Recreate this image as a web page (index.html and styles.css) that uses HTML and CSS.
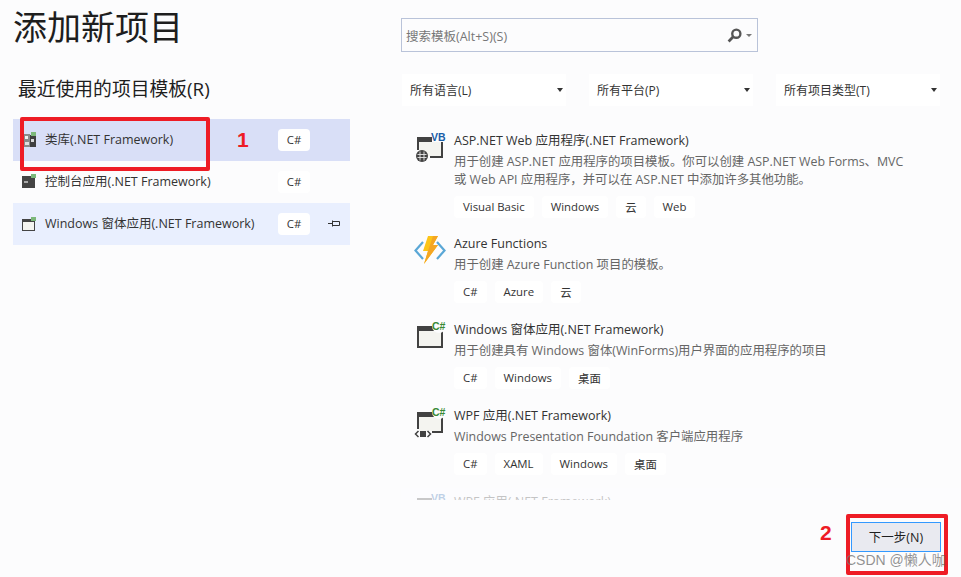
FILE: index.html
```html
<!DOCTYPE html>
<html lang="zh-CN">

<head>
  <meta charset="UTF-8">
  <meta name="viewport" content="width=device-width, initial-scale=1.0">
  <title>添加新项目</title>
  <link rel="stylesheet" href="styles.css">
</head>

<body>
  <div class="page">
    <div class="columns">
      <section class="recent">
        <h1>添加新项目</h1>
        <h2>最近使用的项目模板(R)</h2>
        <ul class="recent-list">
          <li class="recent-row selected">
            <svg class="row-icon" viewBox="0 0 14 16">
              <rect x="2" y="2" width="6" height="13" fill="#8a8a8a"/>
              <rect x="8" y="3" width="6" height="12" fill="#3f3f3f"/>
              <rect x="3" y="4" width="3" height="3" fill="#f0f0f0"/>
              <rect x="3" y="10" width="4" height="3" fill="#e0e0e0"/>
              <rect x="9" y="7" width="3" height="3" fill="#d8d8d8"/>
              <rect x="9" y="0" width="5" height="4" fill="#7cb87a"/>
            </svg>
            <span class="row-name">类库(.NET Framework)</span>
            <span class="chip row-chip">C#</span>
          </li>
          <li class="recent-row">
            <svg class="row-icon" viewBox="0 0 14 16">
              <rect x="0" y="2" width="13" height="12" fill="#444"/>
              <rect x="2" y="7" width="4" height="2" fill="#aaa"/>
              <rect x="9" y="0" width="5" height="4" fill="#7cb87a"/>
            </svg>
            <span class="row-name">控制台应用(.NET Framework)</span>
            <span class="chip row-chip">C#</span>
          </li>
          <li class="recent-row pinned">
            <svg class="row-icon" viewBox="0 0 14 16">
              <rect x="0.5" y="3.5" width="12" height="11" fill="#f4f4f0" stroke="#444"/>
              <rect x="0" y="3" width="13" height="3" fill="#444"/>
              <rect x="9" y="1" width="5" height="4" fill="#7cb87a"/>
            </svg>
            <span class="row-name">Windows 窗体应用(.NET Framework)</span>
            <span class="chip row-chip">C#</span>
            <svg class="pin" viewBox="0 0 12 7">
              <path d="M0 3.5H4M4.5 1.5H11.5V5.5H4.5ZM4.5 0.5V6.5" fill="none" stroke="#333"/>
            </svg>
          </li>
        </ul>
      </section>

      <section class="browse">
        <div class="search">
          <span class="search-text">搜索模板(Alt+S)(S)</span>
          <svg class="search-icon" viewBox="0 0 14 14">
            <circle cx="8.7" cy="5.3" r="3.8" fill="none" stroke="#555" stroke-width="2.2"/>
            <path d="M6 8L1.5 12.5" stroke="#555" stroke-width="2.6"/>
          </svg>
          <span class="caret small"></span>
        </div>

        <div class="filters">
          <div class="filter"><span>所有语言(L)</span><span class="caret"></span></div>
          <div class="filter"><span>所有平台(P)</span><span class="caret"></span></div>
          <div class="filter"><span>所有项目类型(T)</span><span class="caret"></span></div>
        </div>

        <div class="templates">
          <article class="template">
            <svg class="template-icon" viewBox="0 0 32 32">
              <path d="M3 4H18V9H29V25H16V23H27V9H5V17H3Z" fill="#424242"/>
              <rect x="5" y="9" width="22" height="14" fill="#f4f4f0"/>
              <circle cx="8" cy="23" r="6" fill="#424242"/>
              <path d="M3.5 21.5H12.5M3.5 24.5H12.5M6 18.5V27.5M10 18.5V27.5" stroke="#e8e8e8" stroke-width="0.9"/>
              <text class="lang vb" x="17" y="8">VB</text>
            </svg>
            <div class="template-body">
              <h3>ASP.NET Web 应用程序(.NET Framework)</h3>
              <p>用于创建 ASP.NET 应用程序的项目模板。你可以创建 ASP.NET Web Forms、MVC<br>或 Web API 应用程序，并可以在 ASP.NET 中添加许多其他功能。</p>
              <div class="chips">
                <span class="chip">Visual Basic</span>
                <span class="chip">Windows</span>
                <span class="chip">云</span>
                <span class="chip">Web</span>
              </div>
            </div>
          </article>

          <article class="template">
            <svg class="template-icon" viewBox="0 0 32 32">
              <path d="M9 6L1.5 14.5L9 23" fill="none" stroke="#5aa7d6" stroke-width="2.2"/>
              <path d="M23 6L30.5 14.5L23 23" fill="none" stroke="#5aa7d6" stroke-width="2.2"/>
              <path d="M14 0H24L19 9H24L10 28L14 15H9Z" fill="#fcc419"/>
              <path d="M24 0L19 9H24L10 28L14 15L19 0Z" fill="#f5a623"/>
            </svg>
            <div class="template-body">
              <h3>Azure Functions</h3>
              <p>用于创建 Azure Function 项目的模板。</p>
              <div class="chips">
                <span class="chip">C#</span>
                <span class="chip">Azure</span>
                <span class="chip">云</span>
              </div>
            </div>
          </article>

          <article class="template">
            <svg class="template-icon" viewBox="0 0 32 32">
              <rect x="3" y="4" width="26" height="22" fill="#424242"/>
              <rect x="5" y="9" width="22" height="15" fill="#f4f4f0"/>
              <circle cx="25" cy="4" r="7" fill="#fcfcfd"/>
              <text class="lang cs" x="18" y="8">C#</text>
            </svg>
            <div class="template-body">
              <h3>Windows 窗体应用(.NET Framework)</h3>
              <p>用于创建具有 Windows 窗体(WinForms)用户界面的应用程序的项目</p>
              <div class="chips">
                <span class="chip">C#</span>
                <span class="chip">Windows</span>
                <span class="chip">桌面</span>
              </div>
            </div>
          </article>

          <article class="template">
            <svg class="template-icon" viewBox="0 0 32 32">
              <path d="M3 4H29V25H18V23H27V9H5V21H3Z" fill="#424242"/>
              <rect x="5" y="9" width="22" height="14" fill="#f4f4f0"/>
              <circle cx="25" cy="4" r="7" fill="#fcfcfd"/>
              <path d="M4.5 23L1.5 26L4.5 29M13.5 23L16.5 26L13.5 29" fill="none" stroke="#424242" stroke-width="1.5"/>
              <rect x="6" y="23" width="6" height="6" fill="#424242"/>
              <text class="lang cs" x="18" y="8">C#</text>
            </svg>
            <div class="template-body">
              <h3>WPF 应用(.NET Framework)</h3>
              <p>Windows Presentation Foundation 客户端应用程序</p>
              <div class="chips">
                <span class="chip">C#</span>
                <span class="chip">XAML</span>
                <span class="chip">Windows</span>
                <span class="chip">桌面</span>
              </div>
            </div>
          </article>

          <article class="template">
            <svg class="template-icon" viewBox="0 0 32 32">
              <path d="M3 4H18V9H29V25H3Z" fill="#424242"/>
              <text class="lang vb" x="17" y="8">VB</text>
            </svg>
            <div class="template-body">
              <h3>WPF 应用(.NET Framework)</h3>
            </div>
          </article>
        </div>
      </section>
    </div>

    <footer class="actions">
      <button class="next-btn">下一步(N)</button>
    </footer>

    <!-- red markup drawn on top of the screenshot -->
    <div class="mark mark-one"></div>
    <div class="mark mark-two"></div>
    <span class="mark-num num-one">1</span>
    <span class="mark-num num-two">2</span>
    <span class="watermark">CSDN @懒人咖</span>
  </div>
</body>

</html>
```

FILE: styles.css
```css
* {
  box-sizing: border-box;
}

body {
  margin: 0;
  font-family: 'Open Sans', 'Noto Sans CJK SC', sans-serif;
  color: #1e1e1e;
  background-color: #fcfcfd;
}

.page {
  position: relative;
  width: 961px;
  height: 577px;
  overflow: hidden;
  display: flex;
  flex-direction: column;
}

.columns {
  display: flex;
  gap: 51px;
  padding-left: 13px;
}

h1 {
  margin: 0;
  height: 55px;
  font-size: 34px;
  font-weight: 400;
  line-height: 55px;
}

h2 {
  margin: 22px 0 0 5px;
  height: 24px;
  font-size: 18.8px;
  font-weight: 400;
  line-height: 24px;
}

.recent {
  width: 337px;
}

.recent-list {
  list-style: none;
  margin: 18px 0 0;
  padding: 0;
}

.recent-row {
  display: flex;
  align-items: center;
  height: 42px;
  padding-left: 9px;
  font-size: 12.5px;
  color: #333;
}

.recent-row.selected {
  background-color: #d9dff7;
}

.recent-row.pinned {
  background-color: #e9effe;
}

.row-icon {
  width: 14px;
  height: 16px;
  margin-right: 9px;
}

.row-name {
  width: 233px;
  padding-bottom: 4px;
  white-space: nowrap;
}

.chip {
  display: inline-flex;
  align-items: center;
  height: 22px;
  padding: 0 9px 1px;
  border-radius: 4px;
  background-color: #fff;
  font-size: 11.4px;
  color: #333;
  white-space: nowrap;
}

.row-chip {
  width: 32px;
  justify-content: center;
  padding: 0 0 1px;
}

.pin {
  width: 12px;
  height: 7px;
  margin-left: 18px;
  margin-bottom: 2px;
}

.browse {
  flex: 1;
  padding-top: 18px;
  min-width: 0;
}

.search {
  display: flex;
  align-items: center;
  width: 357px;
  height: 34px;
  padding: 0 4px;
  border: 1px solid #b9c3d9;
  font-size: 12.5px;
  color: #777;
}

.search-text {
  flex: 1;
}

.search-icon {
  width: 15px;
  height: 15px;
  margin-right: 4px;
}

.caret {
  width: 0;
  height: 0;
  border-left: 3.5px solid transparent;
  border-right: 3.5px solid transparent;
  border-top: 4px solid #333;
}

.caret.small {
  border-top-color: #777;
  border-left-width: 3px;
  border-right-width: 3px;
  border-top-width: 3px;
  margin-right: 1px;
}

.filters {
  display: flex;
  margin-top: 22px;
  margin-left: 1px;
  gap: 23px;
}

.filter {
  display: flex;
  align-items: center;
  justify-content: space-between;
  width: 164px;
  height: 32px;
  padding: 0 3px 0 8px;
  background-color: #fff;
  font-size: 12px;
  color: #333;
}

.templates {
  position: relative;
  height: 371px;
  margin-top: 23px;
  padding-left: 13px;
  overflow: hidden;
}

/* the last row fades out at the bottom of the list */
.templates::after {
  content: '';
  position: absolute;
  left: 0;
  right: 0;
  bottom: 0;
  height: 12px;
  background: rgba(252, 252, 253, 0.72);
}

.template {
  display: flex;
  height: 86px;
  padding-top: 1px;
}

.template:first-child {
  height: 103px;
}

.template-icon {
  flex: none;
  width: 32px;
  height: 32px;
  margin-top: 3px;
  margin-right: 8px;
}

.lang {
  font-family: 'Liberation Sans', sans-serif;
  font-weight: 700;
  font-size: 10.5px;
}

.lang.vb {
  fill: #1a5ea8;
}

.lang.cs {
  fill: #388a34;
}

h3 {
  margin: 0 0 2px;
  height: 21px;
  font-size: 12.5px;
  font-weight: 400;
  line-height: 21px;
  color: #333;
  white-space: nowrap;
}

.template-body p {
  margin: 0;
  font-size: 12.4px;
  line-height: 18px;
  color: #666;
  white-space: nowrap;
}

.chips {
  display: flex;
  gap: 8px;
  margin-top: 7px;
}

.actions {
  display: flex;
  justify-content: flex-end;
  padding: 22px 20px 0 0;
}

.next-btn {
  width: 90px;
  height: 30px;
  padding: 0 0 2px;
  border: 1px solid #3399ff;
  background-color: #e9eaf0;
  font: inherit;
  font-size: 12.5px;
  color: #1e1e1e;
}

.mark {
  position: absolute;
  border-style: solid;
  border-color: #ee1c25;
  border-radius: 2px;
}

.mark-one {
  left: 20px;
  top: 117px;
  width: 190px;
  height: 54px;
  border-width: 4px;
}

.mark-two {
  left: 846px;
  top: 514px;
  width: 102px;
  height: 61px;
  border-width: 4px;
}

.mark-num {
  position: absolute;
  font-family: 'Liberation Sans', sans-serif;
  font-size: 21px;
  font-weight: 700;
  line-height: 24px;
  color: #ee1c25;
}

.num-one {
  left: 237px;
  top: 128px;
}

.num-two {
  left: 820px;
  top: 521px;
}

.watermark {
  position: absolute;
  left: 846px;
  top: 551px;
  font-family: 'Liberation Sans', 'Noto Sans CJK SC', sans-serif;
  font-size: 14px;
  line-height: 18px;
  color: rgba(110, 110, 110, 0.75);
  white-space: nowrap;
}
```
